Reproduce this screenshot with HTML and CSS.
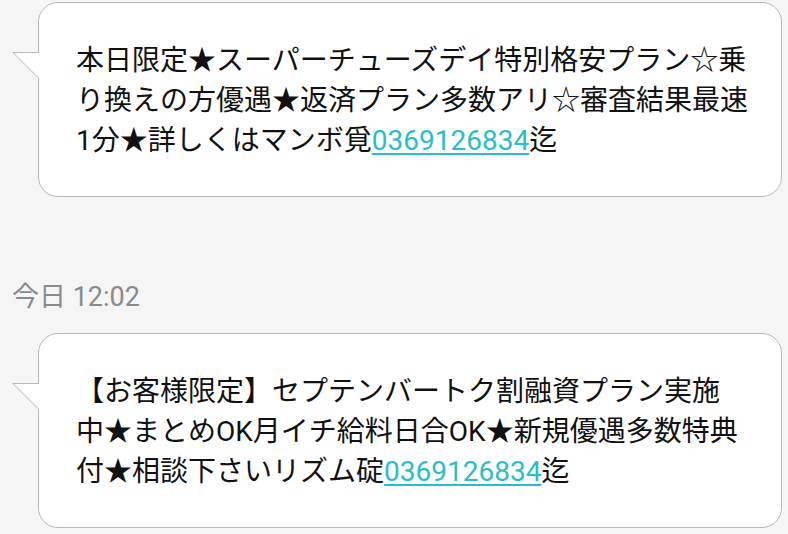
FILE: index.html
```html
<!DOCTYPE html>
<html lang="ja">
<head>
  <meta charset="UTF-8" />
  <meta name="viewport" content="width=device-width, initial-scale=1.0"/>
  <title>メッセージ</title>
  <link rel="stylesheet" href="styles.css">
</head>
<body>
  <div class="thread">
    <div class="bubble">
      本日限定★スーパーチューズデイ特別格安プラン☆乗<br>り換えの方優遇★返済プラン多数アリ☆審査結果最速<br>1分★詳しくはマンボ覓<a href="#">0369126834</a>迄
    </div>

    <div class="stamp">今日 12:02</div>

    <div class="bubble">
      【お客様限定】セプテンバートク割融資プラン実施<br>中★まとめOK月イチ給料日合OK★新規優遇多数特典<br>付★相談下さいリズム碇<a href="#">0369126834</a>迄
    </div>
  </div>
</body>
</html>
```

FILE: styles.css
```css
:root {
  --bg: #f5f5f5;
  --line: #b9b9b9;
  --link: #2bbdc8;
}
body {
  margin: 0;
  background: var(--bg);
  font-family: Roboto, "Noto Sans CJK JP", sans-serif;
  color: #111;
}
.thread {
  padding: 2px 6px 0 12px;
}
.bubble {
  position: relative;
  margin-left: 26px;
  background: #fff;
  border: 1px solid var(--line);
  border-radius: 20px;
  padding: 38px 10px 35px 37px;
  font-size: 28px;
  line-height: 40px;
  white-space: nowrap;
}
/* tail */
.bubble::before,
.bubble::after {
  content: "";
  position: absolute;
  width: 0;
  height: 0;
  border-left-style: solid;
  border-left-color: transparent;
  border-top-style: solid;
}
.bubble::before {
  left: -27px;
  top: 49px;
  border-left-width: 26px;
  border-top-width: 26px;
  border-top-color: var(--line);
}
.bubble::after {
  left: -25px;
  top: 50px;
  border-left-width: 25px;
  border-top-width: 25px;
  border-top-color: #fff;
}
.bubble a {
  color: var(--link);
  text-decoration: underline;
  text-underline-offset: 3px;
}
.stamp {
  margin: 82px 0 18px;
  font-size: 27px;
  line-height: 36px;
  color: #8a8a8a;
}
```
